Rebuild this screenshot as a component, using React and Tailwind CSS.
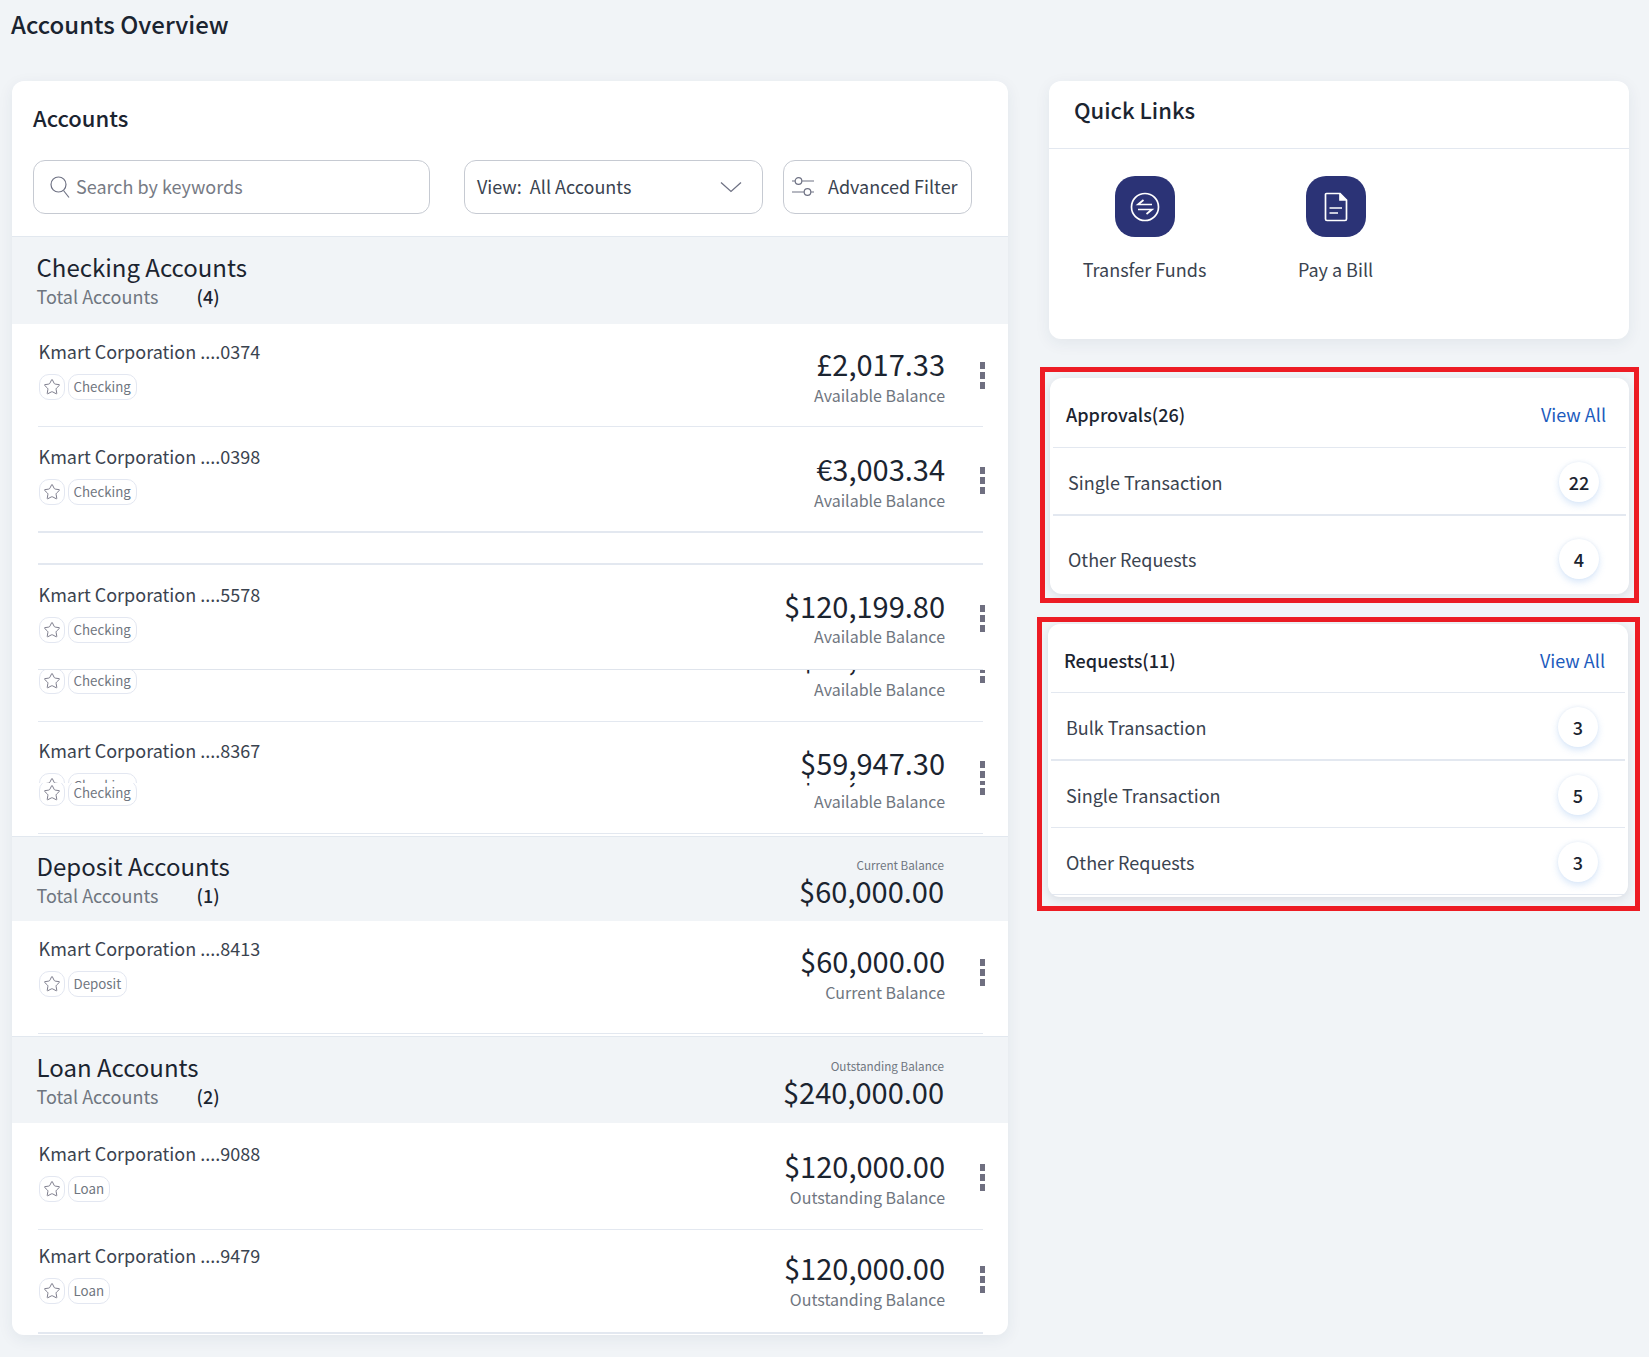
import { Star } from "lucide-react";

const SearchIcon = () => (
  <svg width="22" height="24" viewBox="0 0 22 24" fill="none" stroke="#6f7284" strokeWidth="1.2">
    <circle cx="9.5" cy="9.5" r="7.5" />
    <path d="M14.5 15.5 L20 22.5" />
  </svg>
);

const Chevron = () => (
  <svg width="22" height="12" viewBox="0 0 22 12" fill="none" stroke="#6f7284" strokeWidth="1.3">
    <path d="M1 1.5 L11 10.5 L21 1.5" />
  </svg>
);

const SlidersIcon = () => (
  <svg width="24" height="22" viewBox="0 0 24 22" fill="none" stroke="#6f7284" strokeWidth="1.2">
    <path d="M1 5 H4 M11 5 H23 M1 16 H13 M20 16 H23" />
    <circle cx="7.5" cy="5" r="3.3" />
    <circle cx="16.5" cy="16" r="3.3" />
  </svg>
);

const TransferIcon = () => (
  <svg width="30" height="30" viewBox="0 0 30 30" fill="none" stroke="#fff" strokeWidth="1.7">
    <circle cx="15" cy="15" r="13.5" />
    <path d="M22 12.5 H8 L13.5 8 M8 17.5 H22 L16.5 22" />
  </svg>
);

const FileIcon = () => (
  <svg width="24" height="30" viewBox="0 0 24 30" fill="none" stroke="#fff" strokeWidth="1.7">
    <path d="M2.5 1.5 H16 L22.5 8 V27 Q22.5 28.5 21 28.5 H3 Q1.5 28.5 1.5 27 V2.5 Q1.5 1.5 2.5 1.5 Z" />
    <path d="M16 1.5 V8 H22.5" fill="#fff" />
    <path d="M5.5 16 H18 M5.5 21 H14" />
  </svg>
);

const Dots = () => (
  <div className="mt-[21px] -mr-[2px] ml-[35px] flex w-[5px] flex-col gap-[3px]">
    <span className="h-[7px] w-[5px] bg-[#6f6f80]" />
    <span className="h-[7px] w-[5px] bg-[#6f6f80]" />
    <span className="h-[7px] w-[5px] bg-[#6f6f80]" />
  </div>
);

const AccountRow = ({ name, tag, amount, label = "Available Balance", className, amountTop = "pt-[4px]", labelTop = "mt-[2px]" }) => (
  <div className={`mr-[25px] ml-[26px] flex shrink-0 items-start justify-between ${className}`}>
    <div className="pl-[0.5px]">
      <div className="text-[18px] leading-[20px] text-[#3a434f]">{name}</div>
      <div className="mt-[13px] flex gap-[3px]">
        <span className="flex h-[26px] w-[26px] items-center justify-center rounded-[10px] border border-[#e3e7f1] bg-white">
          <Star size={18} strokeWidth={1.2} color="#6f6f80" />
        </span>
        <span className="flex h-[26px] items-center rounded-[10px] border border-[#e3e7f1] bg-white px-[5px] text-[13.3px] leading-[20px] text-[#6f7680]">
          {tag}
        </span>
      </div>
    </div>
    <div className="flex items-start">
      <div className={`text-right ${amountTop}`}>
        <div className="text-[29px] leading-[36px] text-[#1b2430]">{amount}</div>
        <div className={`text-[16px] leading-[24px] text-[#6f7680] ${labelTop}`}>{label}</div>
      </div>
      <Dots />
    </div>
  </div>
);

const SectionHeader = ({ title, count, small, total, className }) => (
  <div className={`flex justify-between border-t border-[#e2e8ef] bg-[#f1f4f7] pr-[64px] pl-[24.5px] ${className}`}>
    <div>
      <div className="text-[24px] leading-[32px] text-[#1b2430]">{title}</div>
      <div className="mt-[1px] flex text-[18px] leading-[24px]">
        <span className="w-[160px] text-[#6f7680]">Total Accounts</span>
        <span className="font-medium text-[#1b2430]">({count})</span>
      </div>
    </div>
    {small && (
      <div className="pt-[6px] text-right">
        <div className="text-[11.7px] leading-[18px] text-[#6f7680]">{small}</div>
        <div className="text-[29px] leading-[32px] text-[#1b2430]">{total}</div>
      </div>
    )}
  </div>
);

const Badge = ({ children }) => (
  <span className="flex h-10 w-10 items-center justify-center rounded-full bg-white text-[18px] font-medium text-[#1b2430] shadow-[0_3px_7px_rgba(110,165,235,0.28),0_-1px_3px_rgba(120,140,180,0.08)]">
    {children}
  </span>
);

const ListRow = ({ label, count, className }) => (
  <div className={`flex items-start justify-between pr-[27px] pl-[15px] ${className}`}>
    <span className="pt-[8px] text-[18px] leading-[24px] text-[#3a434f]">{label}</span>
    <Badge>{count}</Badge>
  </div>
);

const ListHeader = ({ title, className }) => (
  <div className={`flex justify-between border-b border-[#e3e8f0] pr-[20px] pl-[13px] ${className}`}>
    <span className="text-[18px] leading-[24px] font-medium text-[#1b2430]">{title}</span>
    <span className="text-[18px] leading-[24px] text-[#1c5bbd]">View All</span>
  </div>
);

export default function App() {
  return (
    <div className="h-[1357px] overflow-hidden bg-[#f1f4f7] font-['Noto_Sans_CJK_SC','Noto_Sans',sans-serif]">
      <h1 className="pt-[8px] pl-[11px] text-[24px] leading-[32px] font-medium text-[#1b2430]">Accounts Overview</h1>

      <div className="mt-[41px] flex gap-[32px] pl-[12px]">
        {/* accounts list */}
        <div className="w-[996px] overflow-hidden rounded-xl bg-white pb-[1px] shadow-[0_4px_16px_rgba(30,50,80,0.07)]">
          <h2 className="pt-[20px] pl-[21px] text-[22px] leading-[32px] font-medium text-[#1b2430]">Accounts</h2>

          <div className="mt-[27px] mb-[22px] flex pl-[21px]">
            <div className="flex h-[54px] w-[397px] items-center gap-[5px] rounded-[12px] border border-[#c6cad2] pl-[15px] text-[18px] text-[#777b85]">
              <SearchIcon />
              <span className="pb-[2px]">Search by keywords</span>
            </div>
            <div className="ml-[34px] flex h-[54px] w-[299px] items-center justify-between rounded-[12px] border border-[#c6cad2] pr-[20px] pl-[12px] text-[18px] text-[#3a434f]">
              <span className="pb-[2px] whitespace-pre">View:  All Accounts</span>
              <Chevron />
            </div>
            <div className="ml-[20px] flex h-[54px] w-[189px] items-center gap-[13px] rounded-[12px] border border-[#c6cad2] pl-[7px] text-[18px] whitespace-nowrap text-[#3a434f]">
              <SlidersIcon />
              <span className="pb-[2px]">Advanced Filter</span>
            </div>
          </div>

          <SectionHeader title="Checking Accounts" count="4" className="h-[88px] pt-[14px]" />
          <AccountRow name="Kmart Corporation ....0374" tag="Checking" amount="£2,017.33" className="h-[103px] border-b border-[#e3e8f0] pt-[17px]" />
          <AccountRow name="Kmart Corporation ....0398" tag="Checking" amount="€3,003.34" className="h-[106px] border-b-2 border-[#e3e8f0] pt-[19px]" />
          <div className="mr-[25px] ml-[26px] h-[32px] border-b-2 border-[#e3e8f0]" />
          <AccountRow name="Kmart Corporation ....5578" tag="Checking" amount="$120,199.80" amountTop="pt-[3px]" labelTop="mt-[1px]" className="h-[105px] border-b border-[#dfe4ec] pt-[19px]" />

          {/* rows cut by the long-page capture */}
          <div className="flex h-[52px] flex-col justify-end overflow-hidden">
            <AccountRow name="Kmart Corporation ....1126" tag="Checking" amount="$59,947.30" className="h-[106px] border-b border-[#e3e8f0] pt-[19px]" />
          </div>
          <div className="h-[61px] overflow-hidden">
            <AccountRow name="Kmart Corporation ....8367" tag="Checking" amount="$59,947.30" className="h-[103px] pt-[18px]" />
          </div>
          <div className="flex h-[51px] flex-col justify-end overflow-hidden">
            <AccountRow name="Kmart Corporation ....8367" tag="Checking" amount="$59,947.30" className="h-[106px] border-b border-[#e3e8f0] pt-[19px]" />
          </div>
          <div className="h-[2px]" />

          <SectionHeader title="Deposit Accounts" count="1" small="Current Balance" total="$60,000.00" className="h-[85px] pt-[13px]" />
          <AccountRow name="Kmart Corporation ....8413" tag="Deposit" amount="$60,000.00" label="Current Balance" className="h-[113px] border-b border-[#e3e8f0] pt-[17px]" />
          <div className="h-[2px]" />

          <SectionHeader title="Loan Accounts" count="2" small="Outstanding Balance" total="$240,000.00" className="h-[87px] pt-[14px]" />
          <AccountRow name="Kmart Corporation ....9088" tag="Loan" amount="$120,000.00" label="Outstanding Balance" className="h-[107px] border-b border-[#e3e8f0] pt-[20px]" />
          <AccountRow name="Kmart Corporation ....9479" tag="Loan" amount="$120,000.00" label="Outstanding Balance" className="h-[104px] border-b-2 border-[#e3e8f0] pt-[15px]" />
        </div>

        {/* right column */}
        <div className="w-[600px]">
          <div className="mr-[11px] ml-[9px] h-[258px] rounded-xl bg-white shadow-[0_4px_16px_rgba(30,50,80,0.07)]">
            <div className="h-[68px] border-b border-[#e3e8f0] pt-[12px] pl-[25px] text-[22px] leading-[32px] font-medium text-[#1b2430]">Quick Links</div>
            <div className="flex pt-[27px]">
              <div className="flex w-[191px] flex-col items-center">
                <div className="flex h-[61px] w-[60px] items-center justify-center rounded-[20px] bg-[#2b3376]"><TransferIcon /></div>
                <span className="mt-[20px] text-[18px] leading-[24px] text-[#3a434f]">Transfer Funds</span>
              </div>
              <div className="flex w-[191px] flex-col items-center">
                <div className="flex h-[61px] w-[60px] items-center justify-center rounded-[20px] bg-[#2b3376]"><FileIcon /></div>
                <span className="mt-[20px] text-[18px] leading-[24px] text-[#3a434f]">Pay a Bill</span>
              </div>
            </div>
          </div>

          <div className="mt-[28px] w-[599px] border-[5px] border-[#ed1c24] px-[5px] pt-[6px] pb-[4px]">
            <div className="h-[216px] rounded-xl bg-white px-[3px] shadow-[0_2px_8px_rgba(30,50,80,0.12)]">
              <ListHeader title="Approvals(26)" className="h-[70px] pt-[24px]" />
              <ListRow label="Single Transaction" count="22" className="h-[68px] border-b-2 border-[#e3e8f0] pt-[14px]" />
              <ListRow label="Other Requests" count="4" className="h-[78px] pt-[23px]" />
            </div>
          </div>

          <div className="mt-[14px] -ml-[3px] w-[603px] border-[5px] border-[#ed1c24] pt-[2px] pr-[7px] pb-[9px] pl-[6px]">
            <div className="h-[273px] rounded-xl bg-white px-[3px] shadow-[0_2px_8px_rgba(30,50,80,0.12)]">
              <ListHeader title="Requests(11)" className="h-[69px] pt-[24px]" />
              <ListRow label="Bulk Transaction" count="3" className="h-[68px] border-b-2 border-[#e3e8f0] pt-[14px]" />
              <ListRow label="Single Transaction" count="5" className="h-[67px] border-b border-[#e3e8f0] pt-[14px]" />
              <ListRow label="Other Requests" count="3" className="h-[67px] border-b border-[#e3e8f0] pt-[14px]" />
            </div>
          </div>
        </div>
      </div>
    </div>
  );
}
